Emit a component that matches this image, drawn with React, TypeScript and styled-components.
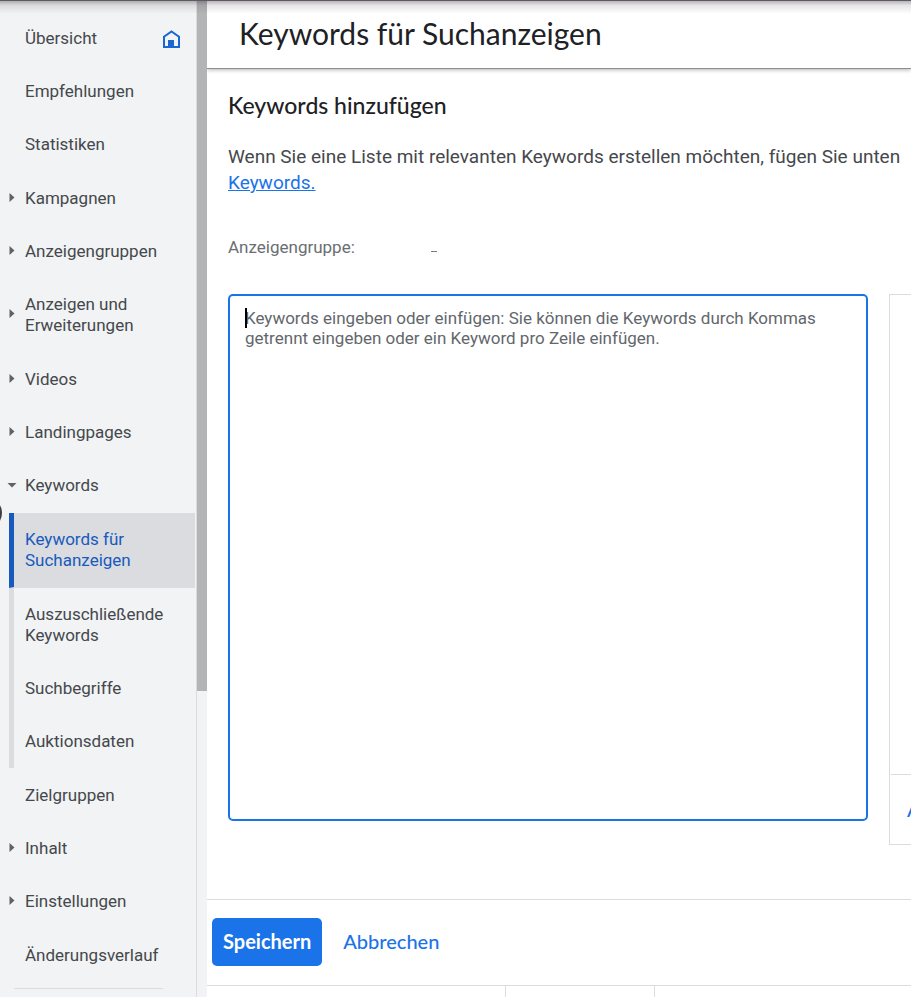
import React from "react";
import styled, { createGlobalStyle, css } from "styled-components";

const Global = createGlobalStyle`
  * { box-sizing: border-box; }
  body { margin: 0; overflow: hidden; font-family: Roboto, "Liberation Sans", sans-serif; color: #45484c; background: #fff; }
  ul { list-style: none; margin: 0; padding: 0; }
`;

const brand = css`
  font-family: Lato, "Open Sans", sans-serif;
`;

const Page = styled.div`
  position: relative;
  display: flex;
  height: 100vh;
  overflow: hidden;
`;

const TopShade = styled.div`
  position: absolute;
  inset: 0 0 auto 0;
  height: 14px;
  border-top: 1px solid #5c5b61;
  background: linear-gradient(rgba(60, 50, 60, 0.36), rgba(60, 50, 60, 0.12) 35%, rgba(60, 50, 60, 0));
  pointer-events: none;
`;

const Sidebar = styled.nav`
  position: relative;
  flex: 0 0 197px;
  padding-top: 12px;
  background: #f1f3f4;
  border-right: 1px solid #dadce0;
`;

const Groups = styled.div`
  display: flex;
  flex-direction: column;
  gap: 1px;
`;

const SubList = styled.ul`
  margin: 0 1px 0 9px;
  border-left: 5px solid #dadce0;
`;

const NavLink = styled.a<{ $sub?: boolean; $active?: boolean }>`
  position: relative;
  display: flex;
  align-items: center;
  padding: 16px 24px 16px ${(p) => (p.$sub ? 11 : 25)}px;
  font-size: 17px;
  line-height: 21px;
  text-decoration: none;
  white-space: pre;
  color: ${(p) => (p.$active ? "#185abc" : "#45484c")};
  ${(p) =>
    p.$active &&
    css`
      margin-left: -5px;
      border-left: 5px solid #185abc;
      border-bottom: 1px solid #dadce0;
      background: #dadce0;
    `}
`;

const Arrow = styled.svg`
  position: absolute;
  left: 7px;
  top: 50%;
  width: 10px;
  height: 10px;
  margin-top: -6px;
  fill: #5f6368;
`;

const HomeIcon = styled.svg`
  position: absolute;
  left: 163px;
  top: 18px;
  width: 17px;
  height: 18px;
`;

const Rule = styled.hr`
  margin: 6px 33px 0 14px;
  border: 0;
  border-top: 1px solid #dadce0;
`;

const EdgeHandle = styled.span`
  position: absolute;
  left: -30px;
  top: 497px;
  width: 32px;
  height: 32px;
  border-radius: 50%;
  background: #3c4043;
`;

const Scrollbar = styled.div`
  flex: 0 0 10px;
  background: #f1f3f4;
`;

const Thumb = styled.div`
  height: 691px;
  background: #b3b4b6;
`;

const Main = styled.main`
  flex: 1;
  min-width: 0;
  display: flex;
  flex-direction: column;
  overflow: hidden;
`;

const TitleBar = styled.header`
  flex: none;
  height: 69px;
  padding: 13px 32px;
  border-bottom: 1px solid #8e8e90;
  box-shadow: 0 1px 4px rgba(0, 0, 0, 0.3);
`;

const Title = styled.h1`
  ${brand}
  margin: 0;
  font-size: 30px;
  line-height: 40px;
  font-weight: 400;
  color: #202124;
`;

const Content = styled.section`
  padding: 22px 0 54px 21px;
`;

const Heading = styled.h2`
  ${brand}
  margin: 0 0 25px;
  font-size: 23px;
  line-height: 28px;
  font-weight: 500;
  color: #202124;
`;

const Intro = styled.p`
  margin: 0 0 40px;
  font-size: 19px;
  line-height: 26px;
  white-space: nowrap;

  a { color: #1a73e8; }
`;

const GroupLine = styled.div`
  display: flex;
  margin-bottom: 36px;
  gap: 76px;
  font-size: 17px;
  line-height: 22px;
  color: #6a6e72;
`;

const Dash = styled.span`
  width: 6px;
  height: 1px;
  margin-top: 15px;
  background: #77797c;
`;

const Columns = styled.div`
  display: flex;
  align-items: flex-start;
  gap: 21px;
`;

const Editor = styled.div`
  position: relative;
  flex: 1 0 640px;
  height: 527px;
`;

const KeywordInput = styled.textarea`
  display: block;
  width: 100%;
  height: 100%;
  padding: 12px 15px;
  border: 2px solid #1a73e8;
  border-radius: 5px;
  outline: none;
  resize: none;
  font: 17px/20px Roboto, "Liberation Sans", sans-serif;
  color: #3c4043;

  &::placeholder { color: #63676c; opacity: 1; }
`;

const Caret = styled.span`
  position: absolute;
  left: 17px;
  top: 14px;
  width: 2px;
  height: 20px;
  background: #000;
`;

const Ideas = styled.aside`
  flex: 0 0 480px;
  border: 1px solid #dadce0;
`;

const IdeasBody = styled.div`
  height: 479px;
`;

const IdeasFooter = styled.div`
  height: 70px;
  margin-left: 1px;
  padding: 22px 16px;
  border-top: 1px solid #dadce0;
`;

const TextButton = styled.button`
  ${brand}
  padding: 0;
  border: 0;
  background: none;
  font-size: 20px;
  line-height: 24px;
  font-weight: 500;
  color: #1a73e8;
`;

const Actions = styled.footer`
  flex: none;
  display: flex;
  align-items: flex-start;
  gap: 21px;
  height: 87px;
  padding: 18px 5px;
  border: solid #dadce0;
  border-width: 1px 0;
`;

const ActionButton = styled(TextButton)<{ $primary?: boolean }>`
  height: 48px;
  padding: 0 ${(p) => (p.$primary ? 11 : 0)}px 2px;
  border-radius: 5px;
  background: ${(p) => (p.$primary ? "#1a73e8" : "none")};
  color: ${(p) => (p.$primary ? "#fff" : "#1a73e8")};
  font-weight: ${(p) => (p.$primary ? 700 : 500)};
`;

const TableStrip = styled.div`
  flex: 1;
  display: grid;
  grid-template-columns: 299px 149px 1fr;
`;

const StripCell = styled.div`
  border-right: 1px solid #dadce0;
`;

type Entry = { label: string; arrow?: "right" | "down"; home?: boolean; active?: boolean };

const before: Entry[][] = [
  [{ label: "Übersicht", home: true }, { label: "Empfehlungen" }, { label: "Statistiken" }],
  [
    { label: "Kampagnen", arrow: "right" },
    { label: "Anzeigengruppen", arrow: "right" },
    { label: "Anzeigen und\nErweiterungen", arrow: "right" },
  ],
  [
    { label: "Videos", arrow: "right" },
    { label: "Landingpages", arrow: "right" },
    { label: "Keywords", arrow: "down" },
  ],
];

const children: Entry[] = [
  { label: "Keywords für\nSuchanzeigen", active: true },
  { label: "Auszuschließende\nKeywords" },
  { label: "Suchbegriffe" },
  { label: "Auktionsdaten" },
];

const after: Entry[][] = [
  [
    { label: "Zielgruppen" },
    { label: "Inhalt", arrow: "right" },
    { label: "Einstellungen", arrow: "right" },
  ],
  [{ label: "Änderungsverlauf" }],
];

function Item({ entry, sub }: { entry: Entry; sub?: boolean }) {
  return (
    <li>
      <NavLink href="#" $sub={sub} $active={entry.active} aria-current={entry.active ? "page" : undefined}>
        {entry.arrow && (
          <Arrow viewBox="0 0 10 10" aria-hidden="true">
            <path d={entry.arrow === "right" ? "M2.500 0 7.500 4.500 2.500 9z" : "M.5 3h9L5 7.500z"} />
          </Arrow>
        )}
        {entry.label}
        {entry.home && (
          <HomeIcon viewBox="0 0 17 18" aria-hidden="true">
            <path d="M1 17V6.800L8.500 1.400 16 6.800V17z" fill="none" stroke="#1967d2" strokeWidth="2" />
            <path d="M5 10h6v7H5z" fill="#1967d2" />
          </HomeIcon>
        )}
      </NavLink>
    </li>
  );
}

function Group({ entries }: { entries: Entry[] }) {
  return (
    <ul>
      {entries.map((e) => (
        <Item key={e.label} entry={e} />
      ))}
    </ul>
  );
}

export default function App() {
  return (
    <Page>
      <Global />
      <Sidebar>
        <Groups>
          {before.map((g) => (
            <Group key={g[0].label} entries={g} />
          ))}
          <SubList>
            {children.map((e) => (
              <Item key={e.label} entry={e} sub />
            ))}
          </SubList>
          {after.map((g) => (
            <Group key={g[0].label} entries={g} />
          ))}
        </Groups>
        <Rule />
        <EdgeHandle />
      </Sidebar>
      <Scrollbar>
        <Thumb />
      </Scrollbar>
      <Main>
        <TitleBar>
          <Title>Keywords für Suchanzeigen</Title>
        </TitleBar>
        <Content>
          <Heading>Keywords hinzufügen</Heading>
          <Intro>
            Wenn Sie eine Liste mit relevanten Keywords erstellen möchten, fügen Sie unten
            <br />
            <a href="#">Keywords.</a>
          </Intro>
          <GroupLine>
            Anzeigengruppe:
            <Dash />
          </GroupLine>
          <Columns>
            <Editor>
              <KeywordInput
                aria-label="Keywords"
                placeholder="Keywords eingeben oder einfügen: Sie können die Keywords durch Kommas getrennt eingeben oder ein Keyword pro Zeile einfügen."
              />
              <Caret />
            </Editor>
            <Ideas>
              <IdeasBody />
              <IdeasFooter>
                <TextButton type="button">A</TextButton>
              </IdeasFooter>
            </Ideas>
          </Columns>
        </Content>
        <Actions>
          <ActionButton type="button" $primary>Speichern</ActionButton>
          <ActionButton type="button">Abbrechen</ActionButton>
        </Actions>
        <TableStrip>
          <StripCell />
          <StripCell />
        </TableStrip>
      </Main>
      <TopShade />
    </Page>
  );
}
